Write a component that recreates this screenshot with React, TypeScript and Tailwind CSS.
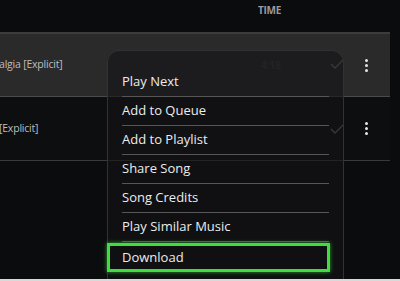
import React from 'react';

const menuItems = ['Play Next', 'Add to Queue', 'Add to Playlist', 'Share Song', 'Song Credits', 'Play Similar Music'];

const Check = () => (
    <svg width="14" height="10" viewBox="0 0 14 10" fill="none">
        <path d="M1 5 L5 9 L13 1" stroke="#6b6b6b" strokeWidth="1.4" />
    </svg>
);

const Kebab = () => (
    <div className="flex flex-col gap-[2px] items-center">
        <span className="w-[3px] h-[3px] rounded-full bg-[#e6e6e6]" />
        <span className="w-[3px] h-[3px] rounded-full bg-[#e6e6e6]" />
        <span className="w-[3px] h-[3px] rounded-full bg-[#e6e6e6]" />
    </div>
);

export default function App() {
    return (
        <div
            className="relative w-[400px] h-[281px] overflow-hidden bg-[#0b0c0e]"
            style={{ fontFamily: '"Open Sans", "Noto Sans", sans-serif' }}
        >
            {/* header */}
            <div className="h-[32px] flex items-start pt-[3px]">
                <span className="ml-[258px] text-[10px] font-bold text-[#9b9b9b] tracking-[-0.3px]">TIME</span>
            </div>

            {/* row 1 - hovered */}
            <div className="w-[390px] h-[65px] bg-[#2a2a2b] border-t-[2px] border-[#3c3c3d] border-b border-b-[#4a4a4a] flex items-center">
                <span className="text-[10.5px] text-[#bdbdbd] w-[262px] -ml-[1px] tracking-[-0.2px]">algia [Explicit]</span>
                <span className="text-[10px] text-[#3d3d3d] font-semibold w-[104px]">4:18</span>
                <Kebab />
            </div>

            {/* row 2 */}
            <div className="w-[390px] h-[64px] bg-[#0d0e10] border-b border-[#3a3a3a] flex items-center">
                <span className="text-[10.5px] text-[#bdbdbd] w-[366px] -ml-[1px] tracking-[-0.2px]">[Explicit]</span>
                <Kebab />
            </div>

            <div className="absolute left-[330px] top-[59px]"><Check /></div>
            <div className="absolute left-[330px] top-[124px]"><Check /></div>

            {/* context menu */}
            <div className="absolute left-[107px] top-[50px] w-[237px] h-[240px] rounded-t-[12px] border border-[#323234] bg-[#141416]/60 pt-[17px]">
                {menuItems.map(item => (
                    <div key={item} className="mx-[14px] h-[29px] border-b border-[#565656] flex items-center text-[13px] text-[#ececec]">
                        {item}
                    </div>
                ))}
                <div className="h-[29px] mx-[14px] flex items-center text-[13px] text-[#ececec] mt-[1px]">Download</div>
            </div>

            {/* highlight box */}
            <div className="absolute left-[107px] top-[243px] w-[223px] h-[29px] border-[3px] border-[#3fdd3f] shadow-[0_0_4px_#2f9f2f]" />

            {/* bottom strip */}
            <div className="absolute left-0 bottom-0 w-full h-[2px] bg-[#d9d9d9]" />
        </div>
    );
}
